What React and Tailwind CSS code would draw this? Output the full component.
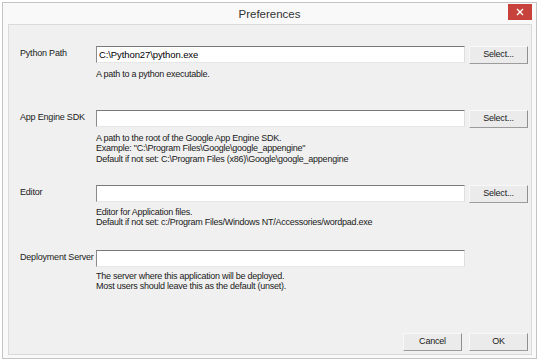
import React from "react";

const font = { fontFamily: '"Liberation Sans", Arial, sans-serif' };

const btn =
  "h-[18px] w-[59px] bg-[#ebebeb] border border-t-[#f8f8f8] border-l-[#f8f8f8] border-r-[#8f8f8f] border-b-[#9c9c9c] text-[9px] tracking-[-0.2px] text-[#1a1a1a]";

const Row = ({ label, value, select = true }) => (
  <div className="flex items-start">
    <div className="w-[76px] shrink-0 whitespace-nowrap text-[9px] tracking-[-0.2px] leading-[10px] pt-[2px] text-[#1a1a1a]">
      {label}
    </div>
    <div className="w-[369px] h-[17px] bg-white border border-t-[#7a7a7a] border-l-[#8a8a8a] border-r-[#dedede] border-b-[#e6e6e6] text-[9.5px] tracking-[-0.1px] leading-[15px] pl-[2px] text-black">
      {value}
    </div>
    {select && <button className={`ml-[4px] ${btn}`}>Select...</button>}
  </div>
);

const Desc = ({ lines, className }) => (
  <div className={`pl-[76px] text-[9px] tracking-[-0.25px] leading-[10.2px] text-[#1a1a1a] ${className}`}>
    {lines.map((l) => (
      <div key={l} className="whitespace-nowrap">
        {l}
      </div>
    ))}
  </div>
);

export default function App() {
  return (
    <div className="w-[540px] h-[362px] bg-white pt-[2px] pl-[2px]" style={font}>
      <div className="w-[535px] h-[357px] bg-[#f9f9f9] border border-[#c4c4c4] flex flex-col">
        <div className="relative h-[21px] shrink-0 flex items-center justify-center">
          <span className="text-[11.5px] text-[#333] pt-[2px]">Preferences</span>
          <div className="absolute right-[4px] top-[1px] w-[24px] h-[16px] bg-[#c7423a] flex items-center justify-center">
            <svg width="8" height="8" viewBox="0 0 8 8">
              <path d="M1 1 L7 7 M7 1 L1 7" stroke="white" strokeWidth="1.4" />
            </svg>
          </div>
        </div>
        <div className="ml-[5px] w-[524px] h-[331px] bg-[#f0f0f0] border border-[#dadada] pl-[11px] pt-[21px]">
          <Row label="Python Path" value="C:\Python27\python.exe" />
          <Desc className="mt-[5px]" lines={["A path to a python executable."]} />

          <div className="mt-[31px]">
            <Row label="App Engine SDK" value="" />
          </div>
          <Desc
            className="mt-[5px]"
            lines={[
              "A path to the root of the Google App Engine SDK.",
              'Example: "C:\\Program Files\\Google\\google_appengine"',
              "Default if not set: C:\\Program Files (x86)\\Google\\google_appengine",
            ]}
          />

          <div className="mt-[21px]">
            <Row label="Editor" value="" />
          </div>
          <Desc
            className="mt-[4px]"
            lines={[
              "Editor for Application files.",
              "Default if not set: c:/Program Files/Windows NT/Accessories/wordpad.exe",
            ]}
          />

          <div className="mt-[23px]">
            <Row label="Deployment Server" value="" select={false} />
          </div>
          <Desc
            className="mt-[4px]"
            lines={[
              "The server where this application will be deployed.",
              "Most users should leave this as the default (unset).",
            ]}
          />

          <div className="mt-[41px] flex justify-end pr-[3px] gap-[7px]">
            <button className={btn}>Cancel</button>
            <button className={btn}>OK</button>
          </div>
        </div>
      </div>
    </div>
  );
}
